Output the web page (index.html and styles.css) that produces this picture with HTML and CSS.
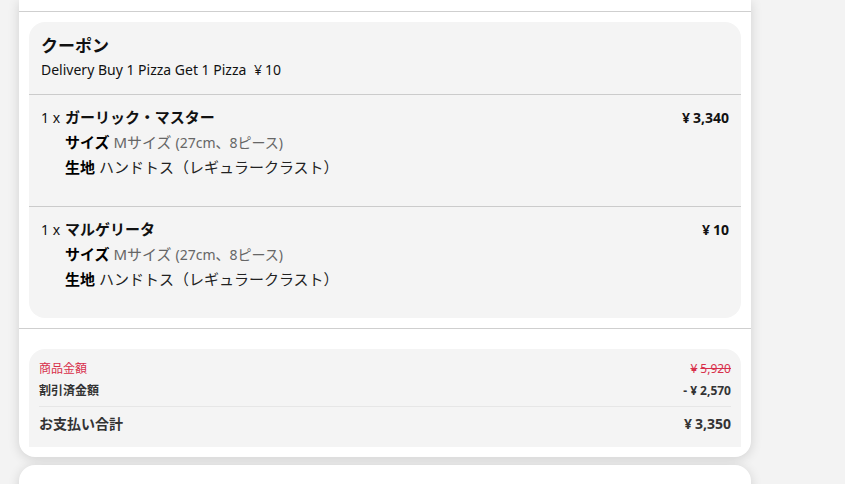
FILE: index.html
```html
<!DOCTYPE html>
<html lang="ja">
<head>
<meta charset="utf-8">
<link rel="stylesheet" href="styles.css">
</head>
<body>
<div class="page">
  <div class="card">
    <div class="card-top"></div>
    <div class="order">
      <div class="coupon">
        <div class="coupon-title">クーポン</div>
        <div class="coupon-desc">Delivery Buy 1 Pizza Get 1 Pizza <span class="gap"><span class="yen">¥</span>10</span></div>
      </div>
      <div class="item">
        <div class="item-head">
          <span class="qty">1 x</span>
          <span class="name">ガーリック・マスター</span>
          <span class="price"><span class="yen">¥</span>3,340</span>
        </div>
        <div class="opt"><b>サイズ</b> <span class="muted">Mサイズ <small>(27cm、8ピース)</small></span></div>
        <div class="opt"><b>生地</b> ハンドトス（レギュラークラスト）</div>
      </div>
      <div class="item">
        <div class="item-head">
          <span class="qty">1 x</span>
          <span class="name">マルゲリータ</span>
          <span class="price"><span class="yen">¥</span>10</span>
        </div>
        <div class="opt"><b>サイズ</b> <span class="muted">Mサイズ <small>(27cm、8ピース)</small></span></div>
        <div class="opt"><b>生地</b> ハンドトス（レギュラークラスト）</div>
      </div>
    </div>
    <div class="summary">
      <div class="row row-sub"><span>商品金額</span><s><span class="yen">¥</span>5,920</s></div>
      <div class="row row-disc"><span>割引済金額</span><span>- <span class="yen">¥</span>2,570</span></div>
      <div class="row row-total"><span>お支払い合計</span><span><span class="yen">¥</span>3,350</span></div>
    </div>
  </div>
  <div class="card card-next"></div>
</div>
</body>
</html>
```
FILE: styles.css
```css
* { box-sizing: border-box; }
html, body {
  margin: 0;
  background: #f3f3f3;
  font-family: "Noto Sans", "Noto Sans CJK JP", sans-serif;
  color: #111;
  overflow: hidden;
}
.page {
  width: 732px;
  margin-left: 19px;
  display: flex;
  flex-direction: column;
  gap: 8px;
}
.card {
  background: #fff;
  border-radius: 0 0 16px 16px;
  box-shadow: 0 2px 12px rgba(0,0,0,0.14);
  padding: 0 10px 10px;
}
.card-top {
  height: 12px;
  border-bottom: 1px solid #cfcfcf;
  margin: 0 -10px 10px;
}
.order {
  background: #f4f4f4;
  border-radius: 16px;
}
.coupon {
  padding: 12px 12px 12px;
  border-bottom: 1px solid #cbcbcb;
}
.coupon-title {
  font-size: 17px;
  font-weight: 700;
  line-height: 24px;
}
.coupon-desc {
  font-size: 14px;
  line-height: 24px;
  color: #111;
}
.gap { margin-left: 4px; }
.yen { margin-right: 3px; }
.item {
  padding: 10px 12px 26px;
}
.item + .item { border-top: 1px solid #cbcbcb; }
.item-head {
  display: flex;
  align-items: baseline;
  line-height: 25px;
}
.qty {
  width: 24px;
  font-size: 14px;
}
.name {
  flex: 1;
  font-size: 15px;
  font-weight: 700;
}
.price {
  font-size: 14px;
  font-weight: 700;
}
.opt {
  padding-left: 24px;
  font-size: 15px;
  line-height: 25px;
  color: #222;
}
.opt b { color: #000; }
.muted { color: #666; }
.muted small { font-size: 14px; }
.summary {
  margin: 10px -10px 0;
  border-top: 1px solid #cfcfcf;
  padding: 20px 10px 0;
}
.row {
  display: flex;
  justify-content: space-between;
  align-items: center;
  background: #f4f4f4;
  padding: 0 10px;
  color: #333;
}
.row-sub {
  font-size: 12px;
  line-height: 18px;
  padding-top: 11px;
  border-radius: 16px 16px 0 0;
  color: #d8304b;
}
.row-sub s { color: #d8304b; }
.row-disc {
  font-size: 12px;
  font-weight: 700;
  line-height: 18px;
  padding-top: 4px;
  padding-bottom: 7px;
  position: relative;
}
.row-disc::after {
  content: "";
  position: absolute;
  left: 10px;
  right: 10px;
  bottom: 0;
  border-bottom: 1px solid #e6e6e6;
}
.row-total {
  font-size: 14px;
  font-weight: 700;
  line-height: 22px;
  padding-top: 6px;
  padding-bottom: 12px;
}
.card-next {
  height: 40px;
  border-radius: 16px 16px 0 0;
}
```
